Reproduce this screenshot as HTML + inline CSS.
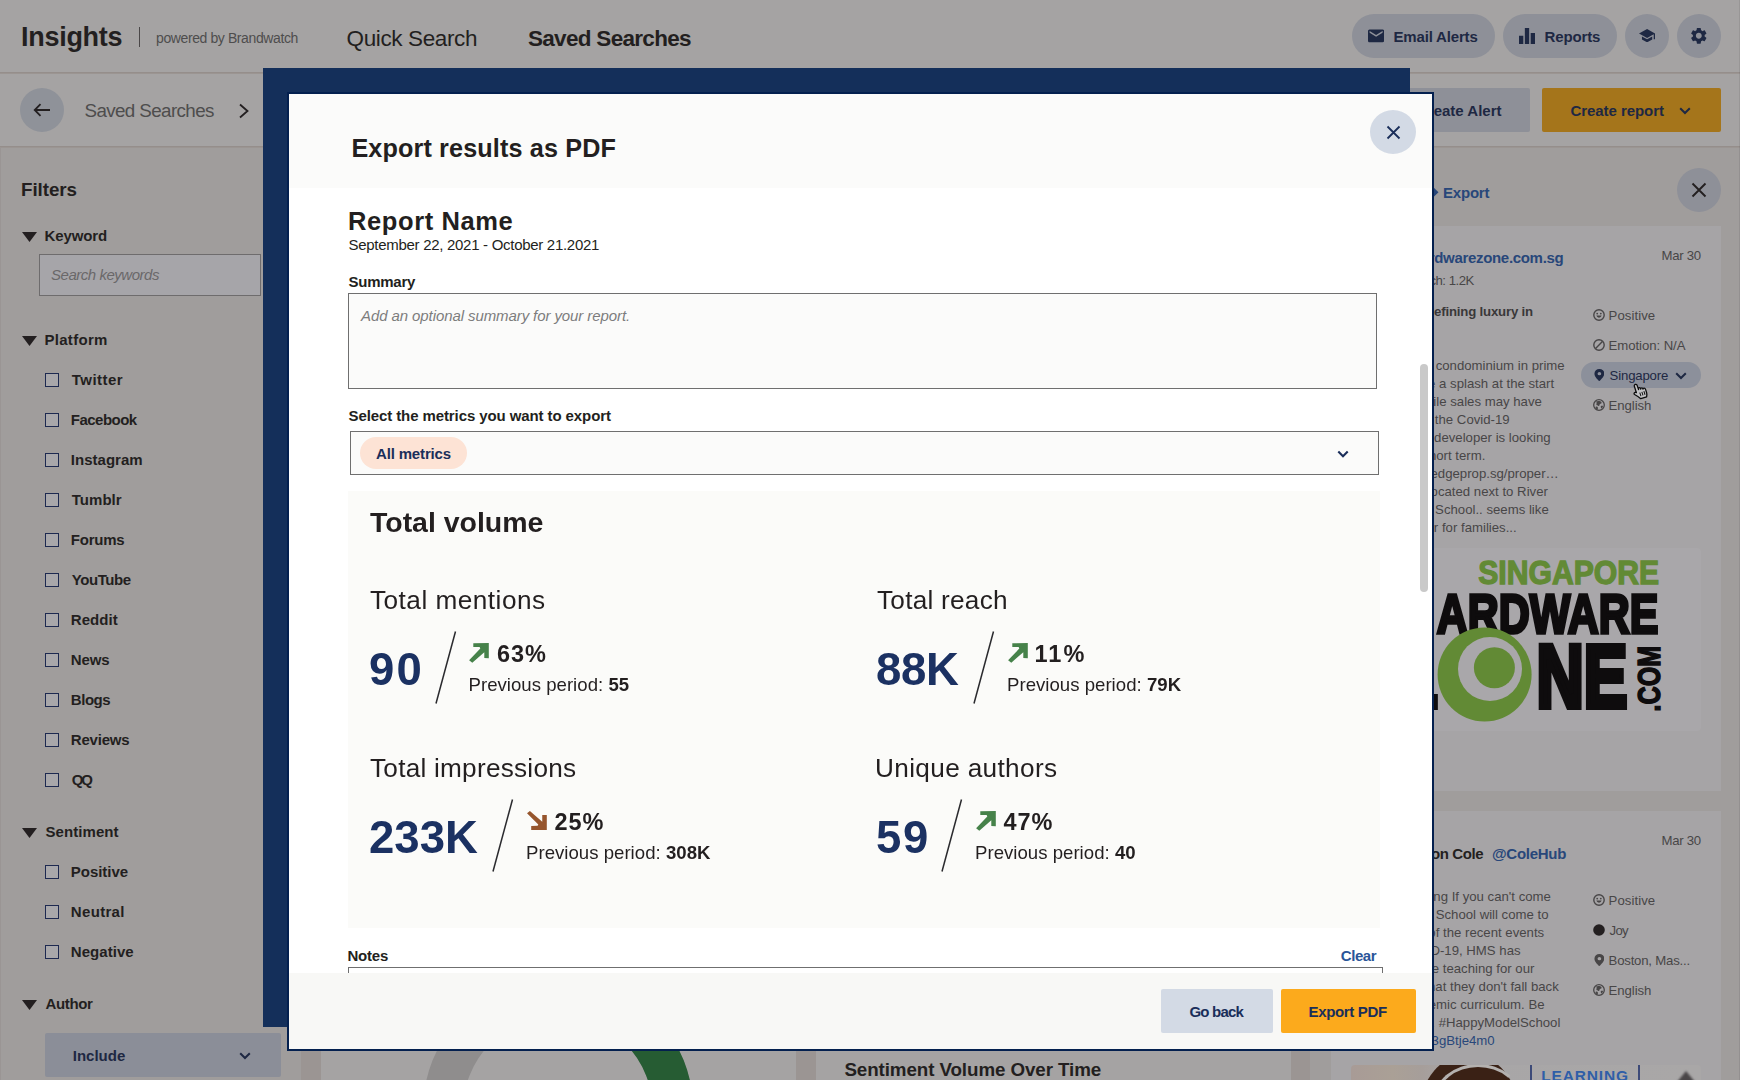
<!DOCTYPE html>
<html lang="en"><head><meta charset="utf-8"><title>Export results as PDF</title>
<style>
html,body{margin:0;padding:0;background:#9b9593;}
body{width:1741px;height:1080px;overflow:hidden;position:relative;font-family:"Liberation Sans",sans-serif;color:#231f20;}
#root{position:absolute;left:0;top:0;width:1741px;height:1080px;overflow:hidden;}
.b{position:absolute;display:block;}
.t{position:absolute;white-space:nowrap;line-height:1;display:block;}
.bl{filter:blur(0.35px);}
</style></head>
<body><div id="root">
<div class="b" style="left:0.00px;top:0.00px;width:1741.00px;height:1080.00px;background:#9b9593;"></div>
<div class="b" style="left:0.00px;top:0.00px;width:1741.00px;height:72.00px;background:#a5a3a3;"></div>
<div class="b" style="left:0.00px;top:72.00px;width:1741.00px;height:1.00px;background:#958e8b;"></div>
<div class="b" style="left:0.00px;top:73.00px;width:1741.00px;height:1.00px;background:#9b9592;"></div>
<div class="b" style="left:0.00px;top:74.00px;width:1741.00px;height:72.00px;background:#a5a3a3;"></div>
<div class="b" style="left:0.00px;top:146.00px;width:1741.00px;height:1.00px;background:#958e8b;"></div>
<div class="b" style="left:0.00px;top:147.00px;width:1741.00px;height:1.00px;background:#9b9592;"></div>
<div class="b" style="left:0.00px;top:148.00px;width:301.00px;height:932.00px;background:#a09d9c;border-left:1px solid #9a9594;box-sizing:border-box;"></div>
<div class="b" style="left:321.00px;top:1000.00px;width:475.00px;height:80.00px;background:#a5a3a3;"></div>
<div class="b" style="left:816.00px;top:1000.00px;width:475.00px;height:80.00px;background:#a5a3a3;"></div>
<div class="b" style="left:1310.00px;top:148.00px;width:431.00px;height:932.00px;background:#a09d9c;"></div>
<span class="t" style="top:24.00px;font-size:27.00px;left:21.00px;font-weight:700;letter-spacing:-0.284px;">Insights</span>
<div class="b" style="left:139.00px;top:27.00px;width:1.00px;height:20.00px;background:#4a4748;"></div>
<span class="t" style="top:31.00px;font-size:14.00px;left:156.00px;color:#4e4d4d;letter-spacing:-0.396px;">powered by Brandwatch</span>
<span class="t" style="top:28.00px;font-size:22.50px;left:346.50px;letter-spacing:-0.367px;">Quick Search</span>
<span class="t" style="top:28.00px;font-size:22.50px;left:528.00px;font-weight:700;letter-spacing:-0.700px;">Saved Searches</span>
<div class="b" style="left:1352.00px;top:14.00px;width:143.00px;height:44.00px;background:#8e9098;border-radius:22px;"></div>
<svg class="b" style="left:1368.00px;top:29.00px;" width="16.20" height="13.80" viewBox="2 4 20 16"><path fill="#1e2843" d="M20 4H4c-1.100 0-2 .900-2 2v12c0 1.100.900 2 2 2h16c1.100 0 2-.900 2-2V6c0-1.100-.900-2-2-2zm0 4l-8 5-8-5V6l8 5 8-5v2z"/></svg>
<span class="t" style="top:29.00px;font-size:15.00px;left:1393.50px;font-weight:700;color:#1e2843;letter-spacing:-0.169px;">Email Alerts</span>
<div class="b" style="left:1503.00px;top:14.00px;width:114.00px;height:44.00px;background:#8e9098;border-radius:22px;"></div>
<svg class="b" style="left:1519.00px;top:28.00px;" width="16.00" height="16.00" viewBox="0 0 16 16"><path fill="#1e2843" d="M0 7.700h4.300V16H0zM5.850 0h4.300v16H5.850zM11.700 5h4.300v11h-4.300z"/></svg>
<span class="t" style="top:29.00px;font-size:15.00px;left:1544.50px;font-weight:700;color:#1e2843;letter-spacing:-0.139px;">Reports</span>
<div class="b" style="left:1625.00px;top:14.00px;width:44.00px;height:44.00px;background:#8e9098;border-radius:22px;"></div>
<svg class="b" style="left:1639.00px;top:28.80px;" width="16.20" height="13.40" viewBox="1 3 22 18"><path fill="#1e2843" d="M5 13.180v4L12 21l7-3.820v-4L12 17l-7-3.820zM12 3L1 9l11 6 9-4.910V17h2V9L12 3z"/></svg>
<div class="b" style="left:1677.00px;top:14.00px;width:44.00px;height:44.00px;background:#8e9098;border-radius:22px;"></div>
<svg class="b" style="left:1689.20px;top:26.20px;" width="19.60" height="19.60" viewBox="0 0 24 24"><path fill="#1e2843" d="M19.14 12.94c.04-.3.06-.61.06-.94 0-.32-.02-.64-.07-.94l2.03-1.58a.49.49 0 0 0 .12-.61l-1.92-3.32a.488.488 0 0 0-.59-.22l-2.39.96c-.5-.38-1.03-.7-1.62-.94l-.36-2.54a.484.484 0 0 0-.48-.41h-3.84c-.24 0-.43.17-.47.41l-.36 2.54c-.59.24-1.13.57-1.62.94l-2.39-.96c-.22-.08-.47 0-.59.22L2.74 8.87c-.12.21-.08.47.12.61l2.03 1.58c-.05.3-.09.63-.09.94s.02.64.07.94l-2.03 1.58a.49.49 0 0 0-.12.61l1.92 3.32c.12.22.37.29.59.22l2.39-.96c.5.38 1.03.7 1.62.94l.36 2.54c.05.24.24.41.48.41h3.84c.24 0 .44-.17.47-.41l.36-2.54c.59-.24 1.13-.56 1.62-.94l2.39.96c.22.08.47 0 .59-.22l1.92-3.32c.12-.22.07-.47-.12-.61l-2.01-1.58zM12 15.6c-1.98 0-3.6-1.62-3.6-3.6s1.62-3.6 3.6-3.6 3.6 1.62 3.6 3.6-1.62 3.6-3.6 3.6z"/></svg>
<div class="b" style="left:20.00px;top:88.00px;width:44.00px;height:44.00px;background:#8f9299;border-radius:22px;"></div>
<svg class="b" style="left:33.00px;top:103.00px;" width="18.00" height="14.00" viewBox="0 0 18 14"><path d="M17 7H2M7.5 1.2 1.7 7l5.8 5.8" fill="none" stroke="#231f20" stroke-width="1.8"/></svg>
<span class="t" style="top:102.01px;font-size:18.80px;left:84.50px;color:#4e4d4d;letter-spacing:-0.610px;">Saved Searches</span>
<svg class="b" style="left:238.00px;top:103.00px;" width="12.00" height="16.00" viewBox="0 0 12 16"><path d="M2 1.5 9.5 8 2 14.5" fill="none" stroke="#231f20" stroke-width="1.8"/></svg>
<div class="b" style="left:1388.00px;top:88.00px;width:142.00px;height:44.00px;background:#8e9098;border-radius:2px;"></div>
<span class="t" style="top:103.00px;font-size:15.00px;right:239.50px;font-weight:700;color:#1e2843;">Create Alert</span>
<div class="b" style="left:1542.00px;top:88.00px;width:179.00px;height:44.00px;background:#a5751b;border-radius:2px;"></div>
<span class="t" style="top:103.00px;font-size:15.00px;left:1570.50px;font-weight:700;color:#1e2843;letter-spacing:-0.058px;">Create report</span>
<svg class="b" style="left:1679.00px;top:107.00px;" width="12.00" height="8.00" viewBox="0 0 12 8"><path d="M1.2 1.2 6 6l4.8-4.8" fill="none" stroke="#1e2843" stroke-width="2"/></svg>
<span class="t" style="top:181.01px;font-size:18.80px;left:21.00px;font-weight:700;letter-spacing:-0.069px;">Filters</span>
<svg class="b" style="left:22.00px;top:231.95px;" width="15.00" height="10.00" viewBox="0 0 15 10"><path fill="#231f20" d="M0 0h15L7.5 10z"/></svg>
<span class="t" style="top:228.00px;font-size:15.00px;left:44.50px;font-weight:700;letter-spacing:-0.114px;">Keyword</span>
<div class="b" style="left:39.00px;top:253.50px;width:222.00px;height:42.50px;background:#a6a5a9;border:1px solid #6e6c6d;box-sizing:border-box;"></div>
<span class="t" style="top:267.00px;font-size:15.00px;left:51.00px;font-style:italic;color:#6a6869;letter-spacing:-0.468px;">Search keywords</span>
<svg class="b" style="left:22.00px;top:335.95px;" width="15.00" height="10.00" viewBox="0 0 15 10"><path fill="#231f20" d="M0 0h15L7.5 10z"/></svg>
<span class="t" style="top:332.00px;font-size:15.00px;left:44.50px;font-weight:700;letter-spacing:0.285px;">Platform</span>
<div class="b" style="left:45.00px;top:373.00px;width:14.00px;height:14.00px;background:#a8a7aa;border:1px solid #1d2950;box-sizing:border-box;"></div>
<span class="t" style="top:372.00px;font-size:15.00px;left:71.80px;font-weight:700;letter-spacing:0.464px;">Twitter</span>
<div class="b" style="left:45.00px;top:413.00px;width:14.00px;height:14.00px;background:#a8a7aa;border:1px solid #1d2950;box-sizing:border-box;"></div>
<span class="t" style="top:412.00px;font-size:15.00px;left:70.80px;font-weight:700;letter-spacing:-0.525px;">Facebook</span>
<div class="b" style="left:45.00px;top:453.00px;width:14.00px;height:14.00px;background:#a8a7aa;border:1px solid #1d2950;box-sizing:border-box;"></div>
<span class="t" style="top:452.00px;font-size:15.00px;left:70.80px;font-weight:700;letter-spacing:0.018px;">Instagram</span>
<div class="b" style="left:45.00px;top:493.00px;width:14.00px;height:14.00px;background:#a8a7aa;border:1px solid #1d2950;box-sizing:border-box;"></div>
<span class="t" style="top:492.00px;font-size:15.00px;left:71.80px;font-weight:700;letter-spacing:0.024px;">Tumblr</span>
<div class="b" style="left:45.00px;top:533.00px;width:14.00px;height:14.00px;background:#a8a7aa;border:1px solid #1d2950;box-sizing:border-box;"></div>
<span class="t" style="top:532.00px;font-size:15.00px;left:70.80px;font-weight:700;letter-spacing:-0.233px;">Forums</span>
<div class="b" style="left:45.00px;top:573.00px;width:14.00px;height:14.00px;background:#a8a7aa;border:1px solid #1d2950;box-sizing:border-box;"></div>
<span class="t" style="top:572.00px;font-size:15.00px;left:71.80px;font-weight:700;letter-spacing:-0.432px;">YouTube</span>
<div class="b" style="left:45.00px;top:613.00px;width:14.00px;height:14.00px;background:#a8a7aa;border:1px solid #1d2950;box-sizing:border-box;"></div>
<span class="t" style="top:612.00px;font-size:15.00px;left:70.80px;font-weight:700;letter-spacing:0.067px;">Reddit</span>
<div class="b" style="left:45.00px;top:653.00px;width:14.00px;height:14.00px;background:#a8a7aa;border:1px solid #1d2950;box-sizing:border-box;"></div>
<span class="t" style="top:652.00px;font-size:15.00px;left:70.80px;font-weight:700;letter-spacing:-0.114px;">News</span>
<div class="b" style="left:45.00px;top:693.00px;width:14.00px;height:14.00px;background:#a8a7aa;border:1px solid #1d2950;box-sizing:border-box;"></div>
<span class="t" style="top:692.00px;font-size:15.00px;left:70.80px;font-weight:700;letter-spacing:-0.456px;">Blogs</span>
<div class="b" style="left:45.00px;top:733.00px;width:14.00px;height:14.00px;background:#a8a7aa;border:1px solid #1d2950;box-sizing:border-box;"></div>
<span class="t" style="top:732.00px;font-size:15.00px;left:70.80px;font-weight:700;letter-spacing:-0.199px;">Reviews</span>
<div class="b" style="left:45.00px;top:773.00px;width:14.00px;height:14.00px;background:#a8a7aa;border:1px solid #1d2950;box-sizing:border-box;"></div>
<span class="t" style="top:772.00px;font-size:15.00px;left:71.80px;font-weight:700;letter-spacing:-2.167px;">QQ</span>
<svg class="b" style="left:22.00px;top:827.70px;" width="15.00" height="10.00" viewBox="0 0 15 10"><path fill="#231f20" d="M0 0h15L7.5 10z"/></svg>
<span class="t" style="top:824.00px;font-size:15.00px;left:45.50px;font-weight:700;letter-spacing:0.061px;">Sentiment</span>
<div class="b" style="left:45.00px;top:865.00px;width:14.00px;height:14.00px;background:#a8a7aa;border:1px solid #1d2950;box-sizing:border-box;"></div>
<span class="t" style="top:864.00px;font-size:15.00px;left:70.80px;font-weight:700;letter-spacing:-0.026px;">Positive</span>
<div class="b" style="left:45.00px;top:905.00px;width:14.00px;height:14.00px;background:#a8a7aa;border:1px solid #1d2950;box-sizing:border-box;"></div>
<span class="t" style="top:904.00px;font-size:15.00px;left:70.80px;font-weight:700;letter-spacing:0.331px;">Neutral</span>
<div class="b" style="left:45.00px;top:945.00px;width:14.00px;height:14.00px;background:#a8a7aa;border:1px solid #1d2950;box-sizing:border-box;"></div>
<span class="t" style="top:944.00px;font-size:15.00px;left:70.80px;font-weight:700;letter-spacing:0.045px;">Negative</span>
<svg class="b" style="left:22.00px;top:999.70px;" width="15.00" height="10.00" viewBox="0 0 15 10"><path fill="#231f20" d="M0 0h15L7.5 10z"/></svg>
<span class="t" style="top:996.00px;font-size:15.00px;left:45.50px;font-weight:700;letter-spacing:-0.363px;">Author</span>
<div class="b" style="left:45.00px;top:1033.00px;width:236.00px;height:44.00px;background:#8b8e98;border-radius:2px;"></div>
<span class="t" style="top:1048.00px;font-size:15.00px;left:72.70px;font-weight:700;color:#1e2843;letter-spacing:0.022px;">Include</span>
<svg class="b" style="left:239.00px;top:1052.00px;" width="12.00" height="8.00" viewBox="0 0 12 8"><path d="M1.2 1.2 6 6l4.8-4.8" fill="none" stroke="#1e2843" stroke-width="2"/></svg>
<svg class="b" style="left:321px;top:1000px" width="475" height="80" viewBox="321 1000 475 80"><circle cx="558" cy="1110.3" r="115" fill="none" stroke="#8f8d8d" stroke-width="40"/><path d="M 558 995.3 A 115 115 0 0 1 673 1110.3" fill="none" stroke="#265c33" stroke-width="40.6"/></svg>
<span class="t" style="top:1061.01px;font-size:18.80px;left:844.40px;font-weight:700;letter-spacing:-0.094px;">Sentiment Volume Over Time</span>
<span class="t" style="top:185.00px;font-size:15.00px;left:1443.00px;font-weight:700;color:#28477a;letter-spacing:-0.202px;">Export</span>
<svg class="b" style="left:1423.00px;top:186.00px;" width="16.00" height="13.00" viewBox="0 0 16 13"><path fill="#28477a" d="M9 0l6.500 6.200L9 12.500V9C4.500 9 2 10.500 0 13c.8-4.500 3.500-8.500 9-9.300z"/></svg>
<div class="b" style="left:1677.00px;top:168.00px;width:44.00px;height:44.00px;background:#8e9098;border-radius:22px;"></div>
<svg class="b" style="left:1691.00px;top:182.00px;" width="16.00" height="16.00" viewBox="0 0 16 16"><path d="M1.5 1.5l13 13M14.5 1.5l-13 13" fill="none" stroke="#231f20" stroke-width="1.9"/></svg>
<div class="b" style="left:1331.00px;top:226.00px;width:390.00px;height:565.00px;background:#a6a4a6;"></div>
<span class="t" style="top:250.00px;font-size:15.00px;right:177.66px;font-weight:700;color:#28477a;letter-spacing:-0.320px;">forums.hardwarezone.com.sg</span>
<span class="t" style="top:274.01px;font-size:13.20px;right:267.20px;color:#484647;letter-spacing:-0.500px;">Reach: 1.2K</span>
<span class="t" style="top:249.01px;font-size:13.20px;left:1661.60px;color:#484647;letter-spacing:-0.302px;">Mar 30</span>
<span class="t" style="top:305.01px;font-size:13.20px;right:208.12px;font-weight:700;color:#3a3839;letter-spacing:-0.180px;">Redefining luxury in</span>
<span class="t" style="top:359.00px;font-size:13.20px;right:176.37px;color:#484647;">A new condominium in prime</span>
<span class="t" style="top:377.00px;font-size:13.20px;right:186.84px;color:#484647;">is set to make a splash at the start</span>
<span class="t" style="top:395.00px;font-size:13.20px;right:199.17px;color:#484647;">while sales may have</span>
<span class="t" style="top:413.00px;font-size:13.20px;right:231.37px;color:#484647;">due to the Covid-19</span>
<span class="t" style="top:431.00px;font-size:13.20px;right:190.37px;color:#484647;">the developer is looking</span>
<span class="t" style="top:449.00px;font-size:13.20px;right:255.64px;color:#484647;">short term.</span>
<span class="t" style="top:467.00px;font-size:13.20px;right:182.21px;color:#484647;">www.edgeprop.sg/proper…</span>
<span class="t" style="top:485.00px;font-size:13.20px;right:193.11px;color:#484647;">located next to River</span>
<span class="t" style="top:503.00px;font-size:13.20px;right:192.27px;color:#484647;">Primary School.. seems like</span>
<span class="t" style="top:521.00px;font-size:13.20px;right:224.34px;color:#484647;">winner for families...</span>
<svg class="b" style="left:1593.00px;top:309.00px;" width="12.00" height="12.00" viewBox="0 0 12 12"><circle cx="6" cy="6" r="5.2" fill="none" stroke="#484647" stroke-width="1.4"/><circle cx="4.2" cy="4.6" r="0.9" fill="#484647"/><circle cx="7.8" cy="4.6" r="0.9" fill="#484647"/><path d="M3.3 6.6a2.8 2.8 0 0 0 5.4 0z" fill="#484647"/></svg>
<span class="t" style="top:309.01px;font-size:13.20px;left:1608.60px;color:#484647;letter-spacing:0.051px;">Positive</span>
<svg class="b" style="left:1593.00px;top:339.00px;" width="12.00" height="12.00" viewBox="0 0 12 12"><circle cx="6" cy="6" r="5.2" fill="none" stroke="#484647" stroke-width="1.4"/><path d="M2.6 9.4 9.4 2.6" stroke="#484647" stroke-width="1.4"/></svg>
<span class="t" style="top:339.01px;font-size:13.20px;left:1608.60px;color:#484647;letter-spacing:-0.072px;">Emotion: N/A</span>
<div class="b" style="left:1581.00px;top:362.00px;width:120.00px;height:26.00px;background:#8c909b;border-radius:13px;"></div>
<svg class="b" style="left:1593.50px;top:368.90px;" width="10.80" height="12.10" viewBox="0 0 10.800 12.100"><g transform="scale(1.080 1.008)"><path fill="#1e2843" fill-rule="evenodd" d="M5 0a4.600 4.600 0 0 1 4.600 4.600C9.600 8 5 12 5 12S.400 8 .400 4.600A4.600 4.600 0 0 1 5 0zm0 2.900a1.700 1.700 0 1 0 0 3.400 1.700 1.700 0 0 0 0-3.400z"/></g></svg>
<span class="t" style="top:369.01px;font-size:13.20px;left:1609.60px;color:#1e2843;letter-spacing:-0.174px;">Singapore</span>
<svg class="b" style="left:1675.00px;top:371.50px;" width="12.00" height="8.00" viewBox="0 0 12 8"><path d="M1.2 1.200 6 6l4.800-4.800" fill="none" stroke="#1e2843" stroke-width="2"/></svg>
<svg class="b" style="left:1593.00px;top:399.00px;" width="12.00" height="12.00" viewBox="0 0 12 12"><circle cx="6" cy="6" r="5.300" fill="none" stroke="#484647" stroke-width="1.300"/><path fill="#484647" d="M3 2.600C4.200 2 5.800 1.900 7.200 2.300 8 2.600 8.800 3.200 8.600 4 8.300 4.800 7.300 4.600 6.800 5.200 6.300 5.800 6.600 6.700 5.900 7 5.300 7.200 5 6.400 4.400 6.300 3.700 6.200 3.200 5.600 3.400 4.900 3.500 4.300 3.900 3.900 3.600 3.400 3.400 3.100 3.100 2.900 3 2.600zM3.300 7.400C4 7.300 4.700 7.700 4.900 8.400 5.100 9.200 4.800 10 4.400 10.700 3.400 10.200 2.700 9.300 2.500 8.300 2.500 7.900 2.900 7.500 3.300 7.400zM8.200 6.800C8.800 6.500 9.600 6.600 10.100 7 9.900 8 9.300 8.900 8.500 9.500 8.100 9 7.700 8.400 7.700 7.700 7.700 7.300 7.900 7 8.200 6.800z"/></svg>
<span class="t" style="top:399.01px;font-size:13.20px;left:1608.60px;color:#484647;letter-spacing:-0.086px;">English</span>
<svg class="b" style="left:1630.30px;top:380.30px;" width="22.00" height="22.00" viewBox="-2.500 -2 22 22"><g transform="rotate(-18 8 10) scale(0.980)"><path d="M5.500 1.200c1 0 1.500.700 1.500 1.500v4.600l.300-1.600c.900-.300 1.600 0 1.800.500l.200 1.300.200-.900c.900-.300 1.600 0 1.900.600l.100 1c.200-.500.500-.700 1.100-.600.800.100 1.300.700 1.300 1.600v3.600c0 1.500-.600 2.700-1.300 4H6.300c-1.400-2.300-3-4.200-4.700-6-.500-.700-.200-1.500.400-1.800.700-.400 1.400-.100 2 .500V2.700c0-.800.500-1.500 1.500-1.500z" fill="#c2c2c4" stroke="#0c0c0c" stroke-width="1.300" stroke-linejoin="round"/><path d="M7.300 10.500v3.800M9.500 10.500v3.800M11.700 10.500v3.800" stroke="#0c0c0c" stroke-width="1" fill="none"/></g></svg>
<div class="b" style="left:1351.00px;top:548.00px;width:350.00px;height:183.00px;background:#a9a7aa;border-radius:4px;overflow:hidden;"><svg class="b" style="left:0;top:0" width="350" height="183" viewBox="1351 548 350 183" font-family="Liberation Sans, sans-serif" font-weight="700"><text x="1478.200" y="584.400" font-size="33" textLength="181" lengthAdjust="spacingAndGlyphs" fill="#628a35" stroke="#628a35" stroke-width="1.300">SINGAPORE</text><text x="1399" y="632.700" font-size="55.800" textLength="31" lengthAdjust="spacingAndGlyphs" fill="#0e0c0d" stroke="#0e0c0d" stroke-width="2.600">H</text><text x="1436.800" y="632.500" font-size="55.800" textLength="221.500" lengthAdjust="spacingAndGlyphs" fill="#0e0c0d" stroke="#0e0c0d" stroke-width="3.400">ARDWARE</text><clipPath id="zc"><rect x="1351" y="694" width="100" height="40"/></clipPath><text clip-path="url(#zc)" x="1391.500" y="706.900" font-size="89.400" textLength="46" lengthAdjust="spacingAndGlyphs" fill="#0e0c0d" stroke="#0e0c0d" stroke-width="6">Z</text><text x="1536.500" y="706.900" font-size="89.400" textLength="91" lengthAdjust="spacingAndGlyphs" fill="#0e0c0d" stroke="#0e0c0d" stroke-width="6">NE</text><text transform="translate(1659.600 711.400) rotate(-90)" x="0" y="0" font-size="31.700" textLength="65.500" lengthAdjust="spacingAndGlyphs" fill="#0e0c0d" stroke="#0e0c0d" stroke-width="1.500">.COM</text><circle cx="1484.600" cy="674.500" r="47" fill="#628a35"/><circle cx="1490" cy="669" r="32" fill="#a9a7aa"/><circle cx="1494.400" cy="667.700" r="20.500" fill="#628a35"/></svg></div>
<div class="b" style="left:1331.00px;top:811.00px;width:390.00px;height:269.00px;background:#a6a4a6;"></div>
<span class="t" style="top:834.00px;font-size:13.20px;left:1661.60px;color:#484647;letter-spacing:-0.302px;">Mar 30</span>
<span class="t" style="top:846.00px;font-size:15.00px;right:257.76px;font-weight:700;letter-spacing:-0.400px;">Jon Cole</span>
<span class="t" style="top:846.00px;font-size:15.00px;left:1492.00px;font-weight:700;color:#28477a;letter-spacing:-0.275px;">@ColeHub</span>
<span class="t" style="top:890.00px;font-size:13.20px;right:190.07px;color:#484647;">#DistanceLearning If you can't come</span>
<span class="t" style="top:908.00px;font-size:13.20px;right:192.47px;color:#484647;">to School, School will come to</span>
<span class="t" style="top:926.00px;font-size:13.20px;right:196.81px;color:#484647;">you. In light of the recent events</span>
<span class="t" style="top:944.00px;font-size:13.20px;right:220.41px;color:#484647;">around COVID-19, HMS has</span>
<span class="t" style="top:962.00px;font-size:13.20px;right:206.61px;color:#484647;">implemented online teaching for our</span>
<span class="t" style="top:980.00px;font-size:13.20px;right:182.21px;color:#484647;">students so that they don't fall back</span>
<span class="t" style="top:998.00px;font-size:13.20px;right:196.47px;color:#484647;">on their academic curriculum. Be</span>
<span class="t" style="top:1016.00px;font-size:13.20px;right:180.67px;color:#484647;">safe. #HappyModelSchool</span>
<span class="t" style="top:1034.00px;font-size:13.20px;right:246.37px;color:#28477a;">t.co/3gBtje4m0</span>
<svg class="b" style="left:1593.00px;top:894.00px;" width="12.00" height="12.00" viewBox="0 0 12 12"><circle cx="6" cy="6" r="5.2" fill="none" stroke="#484647" stroke-width="1.4"/><circle cx="4.2" cy="4.6" r="0.9" fill="#484647"/><circle cx="7.8" cy="4.6" r="0.9" fill="#484647"/><path d="M3.3 6.6a2.8 2.8 0 0 0 5.4 0z" fill="#484647"/></svg>
<span class="t" style="top:894.01px;font-size:13.20px;left:1608.60px;color:#484647;letter-spacing:0.051px;">Positive</span>
<svg class="b" style="left:1593.00px;top:924.00px;" width="12.00" height="12.00" viewBox="0 0 12 12"><circle cx="6" cy="6" r="5.8" fill="#231f20"/></svg>
<span class="t" style="top:924.01px;font-size:13.20px;left:1609.60px;color:#484647;letter-spacing:-0.764px;">Joy</span>
<svg class="b" style="left:1593.50px;top:953.90px;" width="10.80" height="12.10" viewBox="0 0 10.800 12.100"><g transform="scale(1.080 1.008)"><path fill="#484647" fill-rule="evenodd" d="M5 0a4.600 4.600 0 0 1 4.600 4.600C9.600 8 5 12 5 12S.400 8 .400 4.600A4.600 4.600 0 0 1 5 0zm0 2.900a1.700 1.700 0 1 0 0 3.400 1.700 1.700 0 0 0 0-3.400z"/></g></svg>
<span class="t" style="top:954.01px;font-size:13.20px;left:1608.60px;color:#484647;letter-spacing:-0.217px;">Boston, Mas...</span>
<svg class="b" style="left:1593.00px;top:984.00px;" width="12.00" height="12.00" viewBox="0 0 12 12"><circle cx="6" cy="6" r="5.300" fill="none" stroke="#484647" stroke-width="1.300"/><path fill="#484647" d="M3 2.600C4.200 2 5.800 1.900 7.200 2.300 8 2.600 8.800 3.200 8.600 4 8.300 4.800 7.300 4.600 6.800 5.200 6.300 5.800 6.600 6.700 5.900 7 5.300 7.200 5 6.400 4.400 6.300 3.700 6.200 3.200 5.600 3.400 4.900 3.500 4.300 3.900 3.900 3.600 3.400 3.400 3.100 3.100 2.900 3 2.600zM3.300 7.400C4 7.300 4.700 7.700 4.900 8.400 5.100 9.200 4.800 10 4.400 10.700 3.400 10.200 2.700 9.300 2.500 8.300 2.500 7.900 2.900 7.500 3.300 7.400zM8.200 6.800C8.800 6.500 9.600 6.600 10.100 7 9.900 8 9.300 8.900 8.500 9.500 8.100 9 7.700 8.400 7.700 7.700 7.700 7.300 7.900 7 8.200 6.800z"/></svg>
<span class="t" style="top:984.01px;font-size:13.20px;left:1608.60px;color:#484647;letter-spacing:-0.086px;">English</span>
<div class="b" style="left:1351.00px;top:1065.00px;width:350.00px;height:20.00px;background:#a9a6a6;border-radius:4px 4px 0 0;overflow:hidden;background:linear-gradient(90deg,#a89b96 0,#aaa096 12%,#a69e9a 20%,#a8a6a7 30%,#a9a7a7 100%);"><div class="b" style="left:69px;top:-11.200px;width:98px;height:112px;border-radius:50%;background:#3a2115;"></div><div class="b" style="left:83px;top:-1px;width:88px;height:72px;border-radius:50%;border:3px solid #b4b1af;border-bottom:none;border-right-color:transparent;box-sizing:border-box;"></div><div class="b" style="left:178.500px;top:0;width:2px;height:20px;background:#3d4a78;"></div><div class="b" style="left:287px;top:0;width:2px;height:20px;background:#3d4a78;"></div><div class="b" style="left:326px;top:5.500px;width:0;height:0;border-left:9px solid transparent;border-right:9px solid transparent;border-bottom:11px solid #4a4648;filter:blur(0.800px);"></div></div>
<span class="t" style="top:1068.00px;font-size:15.50px;left:1541.20px;font-weight:700;color:#2f5ea8;letter-spacing:0.845px;">LEARNING</span>
<div class="b" style="left:1739.00px;top:0.00px;width:1.00px;height:1080.00px;background:rgba(60,55,55,0.12);"></div>
<div class="b" style="left:1740.00px;top:0.00px;width:1.00px;height:1080.00px;background:#ffffff;"></div>
<div class="b" style="left:263.00px;top:68.00px;width:1147.00px;height:959.00px;background:#142f5a;"></div>
<div class="b" style="left:287.00px;top:92.00px;width:1147.00px;height:959.00px;background:#ffffff;border:2px solid #04204f;box-sizing:border-box;"></div>
<div class="b" style="left:289.00px;top:94.00px;width:1143.00px;height:93.50px;background:#fbfbfa;"></div>
<span class="t" style="top:136.01px;font-size:25.20px;left:351.40px;font-weight:700;letter-spacing:0.137px;">Export results as PDF</span>
<div class="b" style="left:1370.00px;top:110.00px;width:46.00px;height:44.00px;background:#d3dae5;border-radius:50%;"></div>
<svg class="b" style="left:1385.50px;top:124.50px;" width="15.00" height="15.00" viewBox="0 0 15 15"><path d="M1.500 1.500l12 12M13.500 1.500l-12 12" fill="none" stroke="#1a2e5a" stroke-width="1.800"/></svg>
<span class="t" style="top:209.00px;font-size:25.50px;left:348.00px;font-weight:700;letter-spacing:0.598px;">Report Name</span>
<span class="t" style="top:237.00px;font-size:15.00px;left:348.50px;letter-spacing:-0.290px;">September 22, 2021 - October 21.2021</span>
<span class="t" style="top:274.00px;font-size:15.00px;left:348.50px;font-weight:700;letter-spacing:-0.254px;">Summary</span>
<div class="b" style="left:348.00px;top:293.00px;width:1029.00px;height:96.00px;background:#fbfbfa;border:1px solid #6f6f6f;box-sizing:border-box;"></div>
<span class="t" style="top:308.00px;font-size:15.00px;left:361.00px;font-style:italic;color:#7d7d7d;letter-spacing:-0.089px;">Add an optional summary for your report.</span>
<span class="t" style="top:408.00px;font-size:15.00px;left:348.50px;font-weight:700;letter-spacing:-0.095px;">Select the metrics you want to export</span>
<div class="b" style="left:350.00px;top:431.00px;width:1029.00px;height:44.00px;background:#fbfbfa;border:1px solid #6f6f6f;box-sizing:border-box;"></div>
<div class="b" style="left:360.00px;top:437.00px;width:107.00px;height:32.00px;background:#fde3d5;border-radius:16px;"></div>
<span class="t" style="top:446.00px;font-size:15.00px;left:376.00px;font-weight:700;color:#1a2e5a;letter-spacing:-0.161px;">All metrics</span>
<svg class="b" style="left:1337.00px;top:449.70px;" width="12.00" height="8.00" viewBox="0 0 12 8"><path d="M1.300 1.500 6 6.200l4.700-4.700" fill="none" stroke="#1a2e5a" stroke-width="2.100"/></svg>
<div class="b" style="left:348.00px;top:491.00px;width:1031.50px;height:437.00px;background:#fbfbf9;"></div>
<span class="t bl" style="top:508.00px;font-size:28.50px;left:370.00px;font-weight:700;letter-spacing:-0.028px;">Total volume</span>
<span class="t bl" style="top:587.01px;font-size:26.20px;left:370.00px;letter-spacing:0.480px;">Total mentions</span>
<span class="t bl" style="top:647.00px;font-size:45.50px;left:369.00px;font-weight:700;color:#1b3162;letter-spacing:2.195px;">90</span>
<svg class="b" style="left:434.50px;top:630.70px;" width="22.00" height="73.00" viewBox="0 0 22 73"><path d="M20.500 0.500 1 72.500" stroke="#2a2a2e" stroke-width="1.500" fill="none"/></svg>
<svg class="b" style="left:469.00px;top:643.30px;" width="20.00" height="20.00" viewBox="0 0 20 20"><path fill="#46824a" d="M4.300 0.300 19.800 0V15.200L15.300 15.100V9.200L3.300 19.700 0.100 17.200 11.300 5.600 10.600 4 4.300 3.900z"/></svg>
<span class="t bl" style="top:643.01px;font-size:23.50px;left:497.00px;font-weight:700;letter-spacing:0.930px;">63%</span>
<span class="t bl" style="top:676.01px;font-size:18.60px;left:468.50px;letter-spacing:0.020px;">Previous period:</span>
<span class="t bl" style="top:676.01px;font-size:18.60px;left:608.50px;font-weight:700;">55</span>
<span class="t bl" style="top:587.01px;font-size:26.20px;left:877.00px;letter-spacing:0.247px;">Total reach</span>
<span class="t bl" style="top:647.00px;font-size:45.50px;left:876.00px;font-weight:700;color:#1b3162;letter-spacing:-0.305px;">88K</span>
<svg class="b" style="left:973.00px;top:630.70px;" width="22.00" height="73.00" viewBox="0 0 22 73"><path d="M20.500 0.500 1 72.500" stroke="#2a2a2e" stroke-width="1.500" fill="none"/></svg>
<svg class="b" style="left:1007.50px;top:643.30px;" width="20.00" height="20.00" viewBox="0 0 20 20"><path fill="#46824a" d="M4.300 0.300 19.800 0V15.200L15.300 15.100V9.200L3.300 19.700 0.100 17.200 11.300 5.600 10.600 4 4.300 3.900z"/></svg>
<span class="t bl" style="top:643.01px;font-size:23.50px;left:1034.50px;font-weight:700;letter-spacing:2.079px;">11%</span>
<span class="t bl" style="top:676.01px;font-size:18.60px;left:1007.00px;letter-spacing:0.020px;">Previous period:</span>
<span class="t bl" style="top:676.01px;font-size:18.60px;left:1147.00px;font-weight:700;">79K</span>
<span class="t bl" style="top:755.01px;font-size:26.20px;left:370.00px;letter-spacing:0.237px;">Total impressions</span>
<span class="t bl" style="top:815.00px;font-size:45.50px;left:369.00px;font-weight:700;color:#1b3162;letter-spacing:0.028px;">233K</span>
<svg class="b" style="left:492.00px;top:798.70px;" width="22.00" height="73.00" viewBox="0 0 22 73"><path d="M20.500 0.500 1 72.500" stroke="#2a2a2e" stroke-width="1.500" fill="none"/></svg>
<svg class="b" style="left:526.50px;top:810.50px;" width="20.00" height="20.00" viewBox="0 0 20 20"><path fill="#96552d" d="M0 2.300 2.900 0 15.250 10.800V3.900H19.800V19.100H4.200V14.900L10.600 14.700 11.300 13.600z"/></svg>
<span class="t bl" style="top:811.01px;font-size:23.50px;left:554.50px;font-weight:700;letter-spacing:0.930px;">25%</span>
<span class="t bl" style="top:844.01px;font-size:18.60px;left:526.00px;letter-spacing:0.020px;">Previous period:</span>
<span class="t bl" style="top:844.01px;font-size:18.60px;left:666.00px;font-weight:700;">308K</span>
<span class="t bl" style="top:755.01px;font-size:26.20px;left:875.00px;letter-spacing:0.345px;">Unique authors</span>
<span class="t bl" style="top:815.00px;font-size:45.50px;left:876.00px;font-weight:700;color:#1b3162;letter-spacing:1.695px;">59</span>
<svg class="b" style="left:941.00px;top:798.70px;" width="22.00" height="73.00" viewBox="0 0 22 73"><path d="M20.500 0.500 1 72.500" stroke="#2a2a2e" stroke-width="1.500" fill="none"/></svg>
<svg class="b" style="left:975.50px;top:811.30px;" width="20.00" height="20.00" viewBox="0 0 20 20"><path fill="#46824a" d="M4.300 0.300 19.800 0V15.200L15.300 15.100V9.200L3.300 19.700 0.100 17.200 11.300 5.600 10.600 4 4.300 3.900z"/></svg>
<span class="t bl" style="top:811.01px;font-size:23.50px;left:1003.50px;font-weight:700;letter-spacing:0.930px;">47%</span>
<span class="t bl" style="top:844.01px;font-size:18.60px;left:975.00px;letter-spacing:0.020px;">Previous period:</span>
<span class="t bl" style="top:844.01px;font-size:18.60px;left:1115.00px;font-weight:700;">40</span>
<span class="t" style="top:948.00px;font-size:15.00px;left:347.50px;font-weight:700;letter-spacing:-0.208px;">Notes</span>
<span class="t" style="top:948.00px;font-size:15.00px;left:1340.75px;font-weight:700;color:#2a5599;letter-spacing:-0.421px;">Clear</span>
<div class="b" style="left:348.00px;top:967.00px;width:1035.00px;height:73.00px;background:#fff;border:1px solid #6f6f6f;box-sizing:border-box;"></div>
<div class="b" style="left:1420.00px;top:364.00px;width:8.00px;height:228.00px;background:#c9c9c9;border-radius:4px;"></div>
<div class="b" style="left:289.00px;top:972.50px;width:1143.00px;height:76.50px;background:#f8f8f6;"></div>
<div class="b" style="left:1161.00px;top:989.00px;width:112.00px;height:44.00px;background:#d3dae5;border-radius:2px;"></div>
<span class="t" style="top:1004.00px;font-size:15.00px;left:1189.50px;font-weight:700;color:#1a2e5a;letter-spacing:-0.807px;">Go back</span>
<div class="b" style="left:1281.00px;top:989.00px;width:135.00px;height:44.00px;background:#fcaa1c;border-radius:2px;"></div>
<span class="t" style="top:1004.00px;font-size:15.00px;left:1308.50px;font-weight:700;color:#1a2e5a;letter-spacing:-0.334px;">Export PDF</span>
</div></body></html>
